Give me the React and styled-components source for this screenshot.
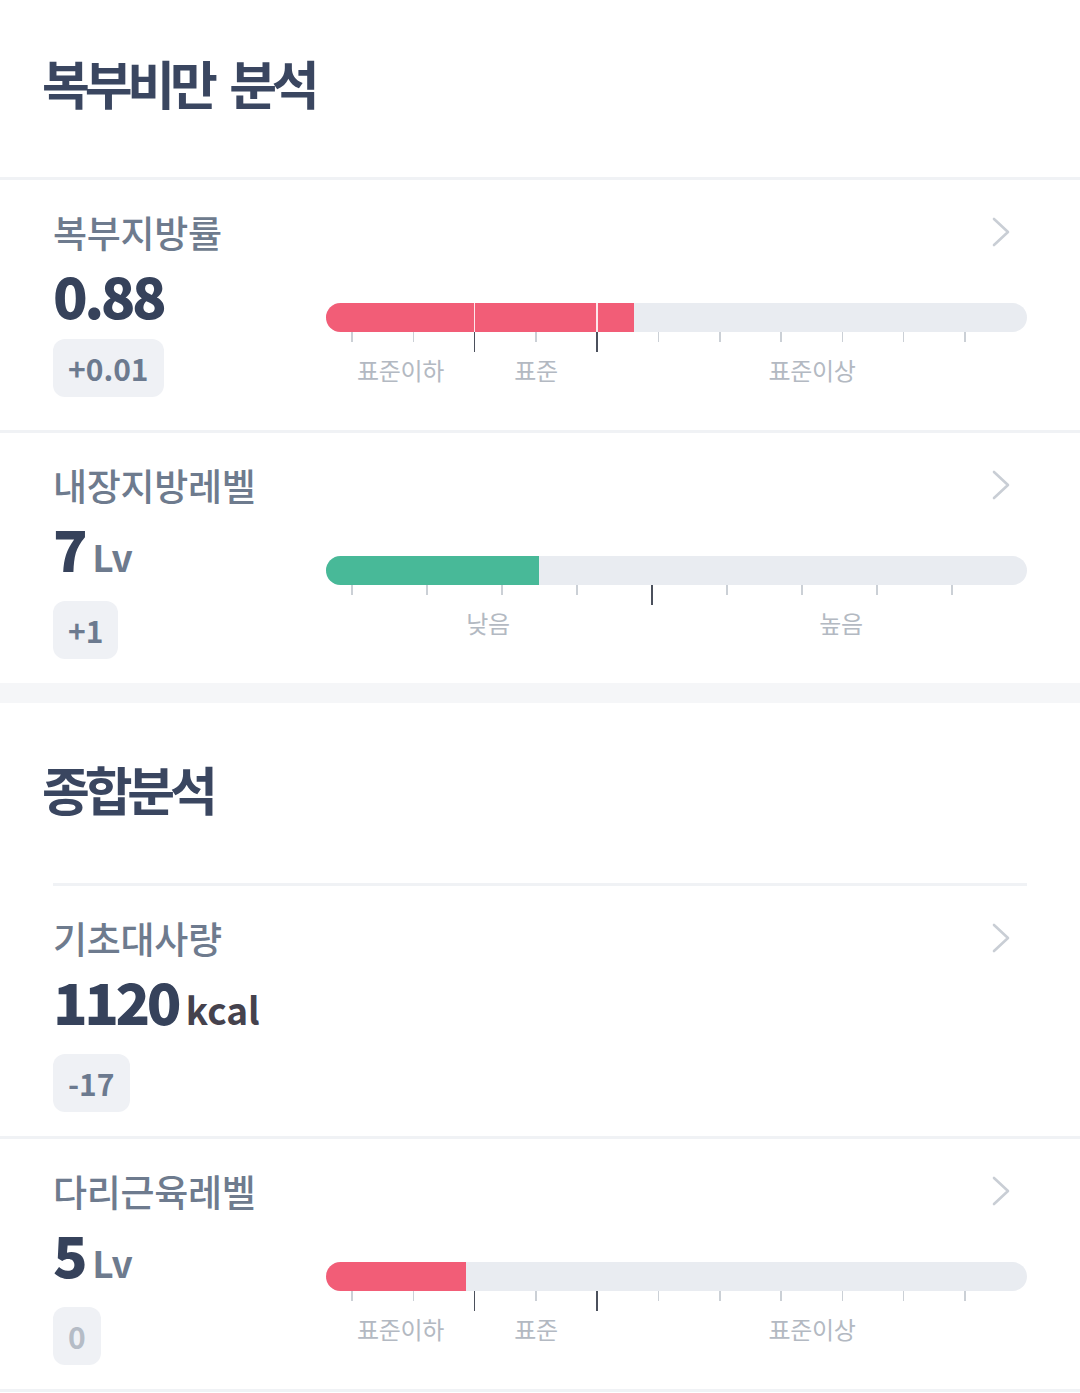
import React from 'react';
import styled, { createGlobalStyle } from 'styled-components';

const GlobalStyle = createGlobalStyle`
  html, body { margin: 0; padding: 0; background: #ffffff; }
  body { font-family: "Noto Sans CJK KR", "Noto Sans", sans-serif; }
  * { box-sizing: border-box; }
`;

const Page = styled.div`
  width: 1080px;
  background: #ffffff;
`;

const SectionTitle = styled.h2`
  margin: 0;
  padding: ${(p) => p.$top}px 42px 64px;
  font-size: 52px;
  line-height: 60px;
  font-weight: 700;
  color: #3a4660;
  letter-spacing: -5.2px;
  word-spacing: 10px;
`;

const Divider = styled.div`
  height: 3px;
  background: #f0f2f5;
  margin: 0 ${(p) => (p.$inset ? 53 : 0)}px;
`;

const Band = styled.div`
  height: 20px;
  background: #f5f6f8;
`;

const Row = styled.div`
  height: 250px;
  padding: 30px 53px 33px;
  display: flex;
  flex-direction: column;
`;

const Header = styled.div`
  display: flex;
  justify-content: space-between;
  align-items: flex-start;
`;

const Label = styled.div`
  font-size: 37px;
  line-height: 44px;
  font-weight: 500;
  color: #6e7b8e;
  letter-spacing: -0.3px;
`;

const ChevronIcon = styled.svg`
  margin-top: 6px;
  margin-right: 16px;
  flex: none;
`;

const Body = styled.div`
  display: flex;
  margin-top: 11px;
`;

const Left = styled.div`
  width: 273px;
  flex: none;
  display: flex;
  flex-direction: column;
  align-items: flex-start;
`;

const ValueLine = styled.div`
  display: flex;
  align-items: baseline;
  font-size: 57px;
  line-height: 58px;
  font-weight: 900;
  color: #36425b;
  letter-spacing: -3.5px;
`;

const Unit = styled.span`
  font-size: 37px;
  font-weight: 700;
  margin-left: 8px;
  letter-spacing: 0;
  color: ${(p) => (p.$dark ? '#45424d' : '#6e7b8e')};
`;

const Badge = styled.div`
  margin-top: 16px;
  height: 58px;
  padding: 0 15px;
  border-radius: 12px;
  background: #eff1f5;
  display: inline-flex;
  align-items: center;
  font-size: 30px;
  font-weight: 700;
  color: ${(p) => (p.$muted ? '#b5bcc6' : '#6c7a8f')};
`;

const Gauge = styled.div`
  flex: 1;
  margin-top: 38px;
`;

const Track = styled.div`
  position: relative;
  height: 29px;
  border-radius: 15px;
  background: #e9ecf1;
  overflow: hidden;
`;

const Fill = styled.div`
  position: relative;
  height: 100%;
  background: ${(p) => p.$color};
`;

const FillSplit = styled.div`
  position: absolute;
  top: 0;
  bottom: 0;
  width: 1.5px;
  background: rgba(255, 255, 255, 0.85);
`;

const Scale = styled.div`
  position: relative;
  height: 60px;
`;

const Tick = styled.div`
  position: absolute;
  top: 0;
  width: 1.5px;
  height: ${(p) => (p.$major ? 20 : 10)}px;
  background: ${(p) => (p.$major ? '#4b505c' : '#cbd0d6')};
`;

const ScaleLabel = styled.div`
  position: absolute;
  top: 24px;
  transform: translateX(-50%);
  white-space: nowrap;
  font-size: 24px;
  line-height: 28px;
  font-weight: 400;
  color: #b3b9c2;
  letter-spacing: -0.3px;
`;

const Chevron = () => (
  <ChevronIcon width="20" height="32" viewBox="0 0 20 32">
    <polyline
      points="3,3 17,16 3,29"
      fill="none"
      stroke="#c9ced5"
      strokeWidth="2.6"
      strokeLinecap="round"
      strokeLinejoin="round"
    />
  </ChevronIcon>
);

const standardScale = {
  ticks: Array.from({ length: 11 }, (_, i) => 26 + 61.3 * i),
  majors: [2, 4],
  labels: [
    { text: '표준이하', at: 74.5 },
    { text: '표준', at: 210 },
    { text: '표준이상', at: 486 },
  ],
};

const levelScale = {
  ticks: Array.from({ length: 9 }, (_, i) => 26 + 75 * i),
  majors: [4],
  labels: [
    { text: '낮음', at: 162 },
    { text: '높음', at: 515 },
  ],
};

const GaugeBar = ({ scale, fill, color }) => {
  const splits = scale.majors.map((i) => scale.ticks[i]).filter((x) => x < fill);
  return (
    <Gauge>
      <Track>
        <Fill $color={color} style={{ width: fill }}>
          {splits.map((x) => (
            <FillSplit key={x} style={{ left: x - 0.75 }} />
          ))}
        </Fill>
      </Track>
      <Scale>
        {scale.ticks.map((x, i) => (
          <Tick key={i} $major={scale.majors.includes(i)} style={{ left: x - 0.75 }} />
        ))}
        {scale.labels.map((l) => (
          <ScaleLabel key={l.text} style={{ left: l.at }}>
            {l.text}
          </ScaleLabel>
        ))}
      </Scale>
    </Gauge>
  );
};

const MetricRow = ({ label, value, unit, darkUnit, delta, mutedDelta, gauge }) => (
  <Row>
    <Header>
      <Label>{label}</Label>
      <Chevron />
    </Header>
    <Body>
      <Left>
        <ValueLine>
          {value}
          {unit && <Unit $dark={darkUnit}>{unit}</Unit>}
        </ValueLine>
        <Badge $muted={mutedDelta}>{delta}</Badge>
      </Left>
      {gauge && <GaugeBar {...gauge} />}
    </Body>
  </Row>
);

export default function App() {
  return (
    <Page>
      <GlobalStyle />
      <SectionTitle $top={53}>복부비만 분석</SectionTitle>
      <Divider />
      <MetricRow
        label="복부지방률"
        value="0.88"
        delta="+0.01"
        gauge={{ scale: standardScale, fill: 308, color: '#f25d77' }}
      />
      <Divider />
      <MetricRow
        label="내장지방레벨"
        value="7"
        unit="Lv"
        delta="+1"
        gauge={{ scale: levelScale, fill: 213, color: '#48b998' }}
      />
      <Band />
      <SectionTitle $top={56}>종합분석</SectionTitle>
      <Divider $inset />
      <MetricRow label="기초대사량" value="1120" unit="kcal" darkUnit delta="-17" />
      <Divider />
      <MetricRow
        label="다리근육레벨"
        value="5"
        unit="Lv"
        delta="0"
        mutedDelta
        gauge={{ scale: standardScale, fill: 140, color: '#f25d77' }}
      />
      <Divider />
    </Page>
  );
}
